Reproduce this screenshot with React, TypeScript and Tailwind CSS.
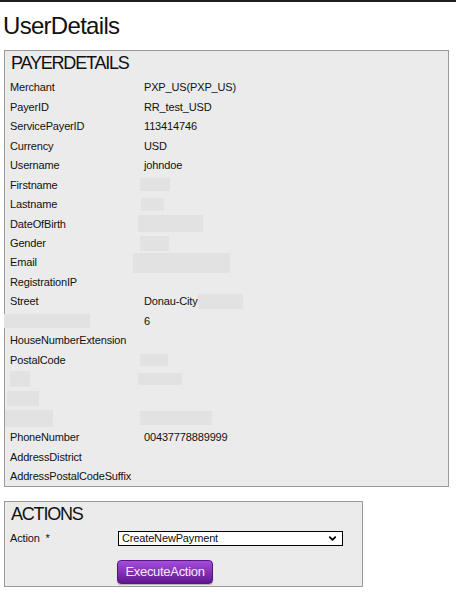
import React from 'react';
import { ChevronDown } from 'lucide-react';

interface Row {
  label?: string;
  value?: string;
  labelBlur?: string;
  valueBlur?: string;
  trailBlur?: string;
}

// blurred (redacted) cells are plain grey boxes; classes written out in full
const rows: Row[] = [
  { label: 'Merchant', value: 'PXP_US(PXP_US)' },
  { label: 'PayerID', value: 'RR_test_USD' },
  { label: 'ServicePayerID', value: '113414746' },
  { label: 'Currency', value: 'USD' },
  { label: 'Username', value: 'johndoe' },
  { label: 'Firstname', valueBlur: 'ml-[-4px] w-[30px] h-[13px]' },
  { label: 'Lastname', valueBlur: 'ml-[-3px] w-[23px] h-[13px]' },
  { label: 'DateOfBirth', valueBlur: 'ml-[-6px] w-[65px] h-[17px]' },
  { label: 'Gender', valueBlur: 'ml-[-4px] w-[29px] h-[15px]' },
  { label: 'Email', valueBlur: 'ml-[-11px] w-[97px] h-[20px]' },
  { label: 'RegistrationIP' },
  { label: 'Street', value: 'Donau-City', trailBlur: 'w-[45px] h-[15px]' },
  { labelBlur: 'ml-[-6px] w-[86px] h-[14px]', value: '6' },
  { label: 'HouseNumberExtension' },
  { label: 'PostalCode', valueBlur: 'ml-[-4px] w-[28px] h-[12px]' },
  { labelBlur: 'ml-0 w-[20px] h-[16px]', valueBlur: 'ml-[-6px] w-[44px] h-[12px]' },
  { labelBlur: 'ml-[-3px] w-[32px] h-[15px]' },
  { labelBlur: 'ml-[-5px] w-[48px] h-[17px]', valueBlur: 'ml-[-4px] w-[72px] h-[14px]' },
  { label: 'PhoneNumber', value: '00437778889999' },
  { label: 'AddressDistrict' },
  { label: 'AddressPostalCodeSuffix' },
];

function BlurBox({ className }: { className: string }) {
  return <span className={`block shrink-0 bg-[#e2e2e2] ${className}`} />;
}

function DetailRow({ row }: { row: Row }) {
  return (
    <div className="flex h-[19.45px] items-center">
      <div className="flex w-[134px] shrink-0 items-center">
        {row.label && <span>{row.label}</span>}
        {row.labelBlur && <BlurBox className={row.labelBlur} />}
      </div>
      <div className="flex flex-1 items-center">
        {row.value && <span>{row.value}</span>}
        {row.valueBlur && <BlurBox className={row.valueBlur} />}
        {row.trailBlur && <BlurBox className={row.trailBlur} />}
      </div>
    </div>
  );
}

export default function App() {
  return (
    <div className="min-h-[593px] border-t-2 border-[#1e1e1e] bg-white font-['Liberation_Sans',Arial,sans-serif] text-[#111]">
      <h1 className="mt-[10px] pl-[3px] text-[24px] leading-[28px] tracking-[-0.7px] font-normal">
        UserDetails
      </h1>

      <section className="mt-[10px] ml-[4px] w-[445px] border border-[#9a9a9a] bg-[#ebebeb] pl-[5px]">
        <h2 className="pt-[2px] pl-[1px] text-[18px] leading-[21px] tracking-[-1.2px] font-normal">
          PAYERDETAILS
        </h2>
        <div className="mt-[4px] text-[11px] tracking-[-0.15px]">
          {rows.map((row, i) => (
            <DetailRow key={i} row={row} />
          ))}
        </div>
      </section>

      <section className="mt-[14px] ml-[4px] w-[359px] border border-[#9a9a9a] bg-[#ebebeb] pl-[5px] pb-[2px]">
        <h2 className="pt-[2px] pl-[1px] text-[18px] leading-[21px] tracking-[-1.2px] font-normal">
          ACTIONS
        </h2>
        <div className="mt-[3px] flex h-[20px] items-center text-[11px] tracking-[-0.15px]">
          <label className="w-[108px] shrink-0">Action&nbsp; *</label>
          <div className="relative w-[225px]">
            <select
              defaultValue="CreateNewPayment"
              className="block h-[15px] w-full appearance-none border border-black bg-white pl-[3px] text-[11px] leading-[13px] text-[#111] outline-none"
            >
              <option>CreateNewPayment</option>
            </select>
            <ChevronDown
              className="pointer-events-none absolute right-[5px] top-[2px] h-[11px] w-[11px] text-black"
              strokeWidth={4}
            />
          </div>
        </div>
        <div className="mt-[11px] pl-[107px]">
          <button className="h-[24px] w-[96px] rounded-[4px] border border-[#5a1584] bg-gradient-to-b from-[#a44ddc] to-[#62168f] text-[13px] tracking-[-0.3px] text-[#f4e8ff] shadow-[0_1px_1px_rgba(0,0,0,0.25)]">
            ExecuteAction
          </button>
        </div>
      </section>
    </div>
  );
}
